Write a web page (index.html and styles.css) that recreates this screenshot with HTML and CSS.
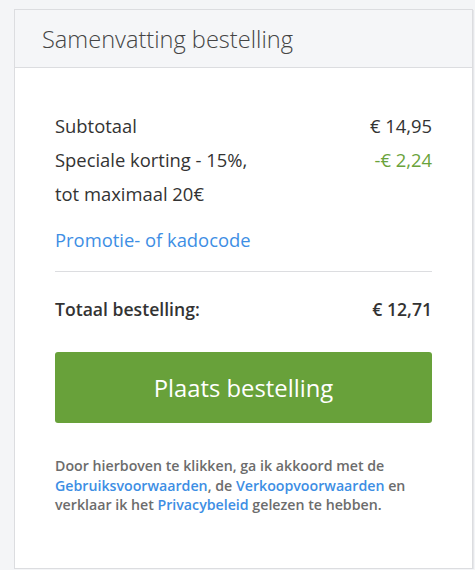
FILE: index.html
```html
<!DOCTYPE html>
<html lang="nl">
<head>
<meta charset="utf-8">
<link rel="stylesheet" href="styles.css">
</head>
<body>
<div class="card">
  <div class="card-header">Samenvatting bestelling</div>
  <div class="card-body">
    <div class="row"><span>Subtotaal</span><span>€ 14,95</span></div>
    <div class="row"><span>Speciale korting - 15%,</span><span class="discount">-€ 2,24</span></div>
    <div class="row"><span>tot maximaal 20€</span></div>
    <a class="promo" href="#">Promotie- of kadocode</a>
    <hr class="divider">
    <div class="row total"><span>Totaal bestelling:</span><span>€ 12,71</span></div>
    <button class="btn">Plaats bestelling</button>
    <p class="legal">Door hierboven te klikken, ga ik akkoord met de <a href="#">Gebruiksvoorwaarden</a>, de <a href="#">Verkoopvoorwaarden</a> en verklaar ik het <a href="#">Privacybeleid</a> gelezen te hebben.</p>
  </div>
</div>
</body>
</html>
```
FILE: styles.css
```css
* { box-sizing: border-box; }
html, body { margin: 0; padding: 0; }
body {
  background: #f4f5f7;
  font-family: "Open Sans", "Liberation Sans", sans-serif;
  color: #333;
  padding: 9px 2px 0 14px;
}
.card {
  width: 459px;
  height: 560px;
  background: #fff;
  border: 1px solid #dcdde0;
  box-shadow: 1px 1px 0 #e6e7ea;
  display: flex;
  flex-direction: column;
}
.card-header {
  height: 58px;
  background: #f5f6f8;
  border-bottom: 1px solid #dcdde0;
  padding: 0 27px;
  font-size: 23.6px;
  font-weight: 300;
  color: #444;
  display: flex;
  align-items: center;
}
.card-body {
  padding: 41px 40px 0 40px;
  display: flex;
  flex-direction: column;
}
.row {
  display: flex;
  justify-content: space-between;
  font-size: 18.4px;
  line-height: 34px;
  color: #333;
}
.discount { color: #6aa33b; }
.promo {
  margin-top: 17px;
  font-size: 18.4px;
  line-height: 24px;
  color: #3d8ee4;
  text-decoration: none;
}
.divider {
  border: 0;
  border-top: 1px solid #dcdde0;
  margin: 19px 0 0 0;
  width: 100%;
}
.total {
  font-weight: 600;
  margin-top: 20px;
  font-size: 17.6px;
}
.btn {
  margin-top: 26px;
  height: 71px;
  border: 0;
  border-radius: 3px;
  background: #68a13a;
  color: #fff;
  font-family: inherit;
  font-size: 23.8px;
  font-weight: 400;
}
.legal {
  margin: 33px 0 0 0;
  font-size: 14.2px;
  line-height: 19.5px;
  font-weight: 600;
  color: #6c6c6c;
}
.legal a { color: #3d8ee4; text-decoration: none; }
```
